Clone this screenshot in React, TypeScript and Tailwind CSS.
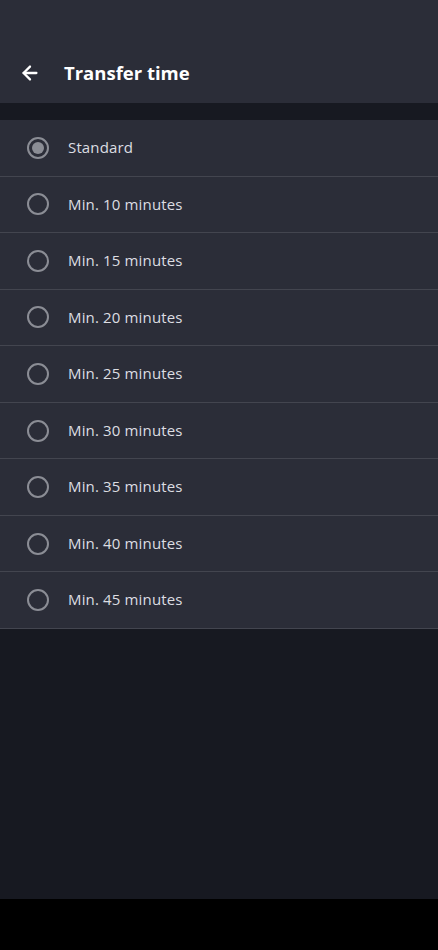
import { ArrowLeft } from 'lucide-react';

const options = [
  'Standard',
  'Min. 10 minutes',
  'Min. 15 minutes',
  'Min. 20 minutes',
  'Min. 25 minutes',
  'Min. 30 minutes',
  'Min. 35 minutes',
  'Min. 40 minutes',
  'Min. 45 minutes',
];

function Radio({ checked }: { checked: boolean }) {
  return (
    <div className="flex h-[22px] w-[22px] items-center justify-center rounded-full border-2 border-[#8b8d95]">
      {checked && <div className="h-[12px] w-[12px] rounded-full bg-[#8b8d95]" />}
    </div>
  );
}

export default function App() {
  return (
    <div
      className="flex h-[950px] w-[438px] flex-col bg-[#171921]"
      style={{ fontFamily: '"Open Sans", "Noto Sans", sans-serif' }}
    >
      <header className="flex h-[103px] items-end bg-[#2b2d38] pb-[10px]">
        <div className="flex h-[40px] items-center">
          <ArrowLeft className="ml-[19px] h-[22px] w-[22px] text-white" strokeWidth={2.5} />
          <h1 className="ml-[23px] text-[18.5px] font-bold text-white">Transfer time</h1>
        </div>
      </header>

      <div className="mt-[17px] flex flex-col">
        {options.map((label, i) => (
          <div
            key={label}
            className="box-border flex h-[56.56px] items-center border-b border-[#43454f] bg-[#2b2d38]"
          >
            <div className="ml-[27px]">
              <Radio checked={i === 0} />
            </div>
            <span className="ml-[19px] -mt-[1px] text-[15px] tracking-[0.15px] text-[#dcdde2]">{label}</span>
          </div>
        ))}
      </div>

      <div className="flex-1" />
      <div className="h-[51px] bg-black" />
    </div>
  );
}
